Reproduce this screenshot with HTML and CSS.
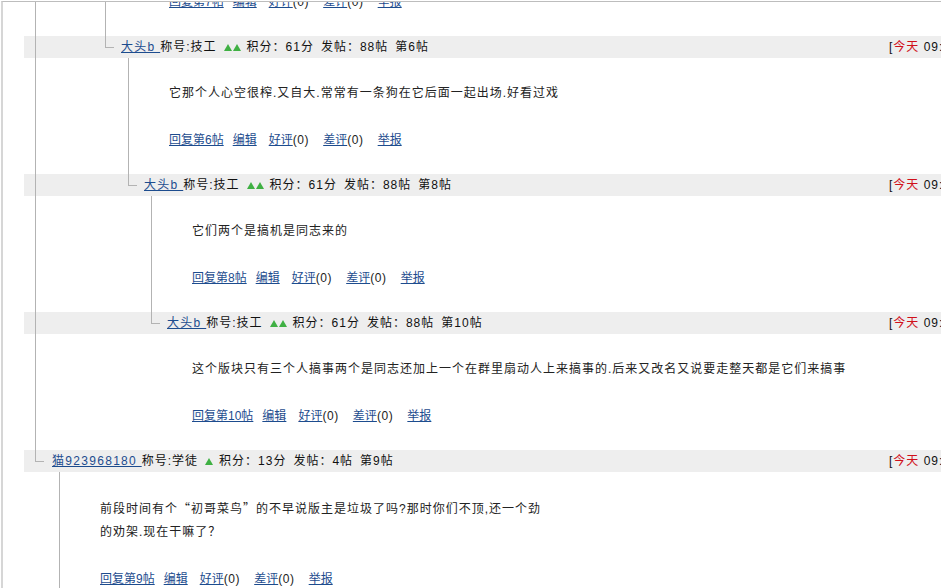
FILE: index.html
```html
<!DOCTYPE html>
<html lang="zh-CN">
<head>
  <meta charset="UTF-8">
  <meta name="viewport" content="width=device-width, initial-scale=1.0">
  <title>帖子回复</title>
  <link rel="stylesheet" href="styles.css">
</head>
<body>
  <div class="frame">
    <div class="scroll">
      <div class="thread">
        <div class="kids">

          <!-- earlier floors, scrolled out of view -->
          <div class="post lv3 cont">
            <div class="kids">

              <div class="post lv4 cont">
                <div class="body cut">
                  <div class="acts"><a href="#">回复第7帖</a><a href="#">编辑</a><span><a href="#">好评</a>(0)</span><span><a href="#">差评</a>(0)</span><a href="#">举报</a></div>
                </div>
              </div>

              <div class="post lv4 has-kids">
                <div class="head">
                  <div class="info"><a href="#" class="name">大头b </a><span>称号:技工</span><span class="rank"><i></i><i></i></span><span class="stat">积分：61分</span><span class="stat">发帖：88帖</span><span class="stat">第6帖</span></div>
                  <div class="date">[<span class="today">今天</span> 09:36]</div>
                </div>
                <div class="body">
                  <p class="text">它那个人心空很榨.又自大.常常有一条狗在它后面一起出场.好看过戏</p>
                  <div class="acts"><a href="#">回复第6帖</a><a href="#">编辑</a><span><a href="#">好评</a>(0)</span><span><a href="#">差评</a>(0)</span><a href="#">举报</a></div>
                </div>
                <div class="kids">

                  <div class="post lv5 has-kids">
                    <div class="head">
                      <div class="info"><a href="#" class="name">大头b </a><span>称号:技工</span><span class="rank"><i></i><i></i></span><span class="stat">积分：61分</span><span class="stat">发帖：88帖</span><span class="stat">第8帖</span></div>
                      <div class="date">[<span class="today">今天</span> 09:41]</div>
                    </div>
                    <div class="body">
                      <p class="text">它们两个是搞机是同志来的</p>
                      <div class="acts"><a href="#">回复第8帖</a><a href="#">编辑</a><span><a href="#">好评</a>(0)</span><span><a href="#">差评</a>(0)</span><a href="#">举报</a></div>
                    </div>
                    <div class="kids">

                      <div class="post lv6">
                        <div class="head">
                          <div class="info"><a href="#" class="name">大头b </a><span>称号:技工</span><span class="rank"><i></i><i></i></span><span class="stat">积分：61分</span><span class="stat">发帖：88帖</span><span class="stat">第10帖</span></div>
                          <div class="date">[<span class="today">今天</span> 09:47]</div>
                        </div>
                        <div class="body">
                          <p class="text">这个版块只有三个人搞事两个是同志还加上一个在群里扇动人上来搞事的.后来又改名又说要走整天都是它们来搞事</p>
                          <div class="acts"><a href="#">回复第10帖</a><a href="#">编辑</a><span><a href="#">好评</a>(0)</span><span><a href="#">差评</a>(0)</span><a href="#">举报</a></div>
                        </div>
                      </div>

                    </div>
                  </div>

                </div>
              </div>

            </div>
          </div>

          <div class="post lv1 has-kids">
            <div class="head">
              <div class="info"><a href="#" class="name">猫923968180 </a><span>称号:学徒</span><span class="rank"><i></i></span><span class="stat">积分：13分</span><span class="stat">发帖：4帖</span><span class="stat">第9帖</span></div>
              <div class="date">[<span class="today">今天</span> 09:44]</div>
            </div>
            <div class="body">
              <p class="text">前段时间有个<span class="cjk">“</span>初哥菜鸟<span class="cjk">”</span>的不早说版主是垃圾了吗?那时你们不顶,还一个劲<br>的劝架.现在干嘛了？</p>
              <div class="acts"><a href="#">回复第9帖</a><a href="#">编辑</a><span><a href="#">好评</a>(0)</span><span><a href="#">差评</a>(0)</span><a href="#">举报</a></div>
            </div>
          </div>

        </div>
      </div>
    </div>
  </div>
</body>
</html>
```

FILE: styles.css
```css
/* General */
body {
  margin: 0;
  font-family: "Liberation Sans", "Noto Sans CJK SC", sans-serif;
  font-size: 12px;
  line-height: 23px;
  letter-spacing: 1px;
  color: #222;
  background-color: #fff;
}

a {
  color: #1d4c8e;
  text-decoration: underline;
}

.cjk {
  font-family: "Noto Sans CJK SC", sans-serif;
}

.frame {
  margin: 1px 0 0 1px;
  height: 586px;
  border-top: 1px solid #bdbdbd;
  border-left: 2px solid #d6d6d6;
  overflow: hidden;
}

.scroll {
  width: 1010px;
  margin-top: -11px;
}

/* Tree levels: --n is where the name starts, --b where the text starts */
.thread { --n: 25px; }
.lv1 { --n: 49px; --b: 97px; }
.lv3 { --n: 95px; --b: 143px; }
.lv4 { --n: 118px; --b: 166px; }
.lv5 { --n: 141px; --b: 189px; }
.lv6 { --n: 164px; --b: 189px; }

.kids {
  --x: calc(var(--n) + 7px);
}

/* Tree lines */
.post {
  position: relative;
}

.post::before {
  content: "";
  position: absolute;
  left: var(--x);
  top: 0;
  width: 8px;
  height: 11px;
  border-left: 1px solid #b3b3b3;
  border-bottom: 1px solid #b3b3b3;
}

.post:not(:last-child)::after {
  content: "";
  position: absolute;
  left: var(--x);
  top: 0;
  bottom: 0;
  border-left: 1px solid #b3b3b3;
}

.cont::before {
  display: none;
}

.has-kids > .body::before {
  content: "";
  position: absolute;
  left: calc(var(--n) + 7px);
  top: 0;
  bottom: 0;
  border-left: 1px solid #b3b3b3;
}

/* Post header */
.head {
  display: flex;
  height: 22px;
  line-height: 22px;
  margin-left: 21px;
  padding-left: calc(var(--n) - 21px);
  background-color: #eeeeee;
  color: #111;
  white-space: nowrap;
}

.info {
  flex: 1;
}

.name {
  letter-spacing: 1.3px;
}

.rank {
  margin: 0 6px 0 7px;
}

.rank i {
  display: inline-block;
  width: 0;
  height: 0;
  margin-right: 1px;
  border-left: 4px solid transparent;
  border-right: 4px solid transparent;
  border-bottom: 7px solid #3fb043;
}

.rank i:last-child {
  margin-right: 0;
}

.stat + .stat {
  margin-left: 7px;
}

.date {
  width: 124px;
}

.today {
  color: #d0101a;
}

/* Post body */
.body {
  position: relative;
  padding: 24px 0 22px var(--b);
}

.body.cut {
  padding-top: 0;
}

.text {
  margin: 0 0 24px;
}

.acts {
  white-space: nowrap;
  letter-spacing: 0;
}

.acts > * {
  margin-right: 12px;
}

.acts > :first-child {
  margin-right: 9px;
}

.acts > span {
  margin-right: 14px;
  letter-spacing: 0.6px;
}

.acts > span a {
  letter-spacing: 0;
}
```
